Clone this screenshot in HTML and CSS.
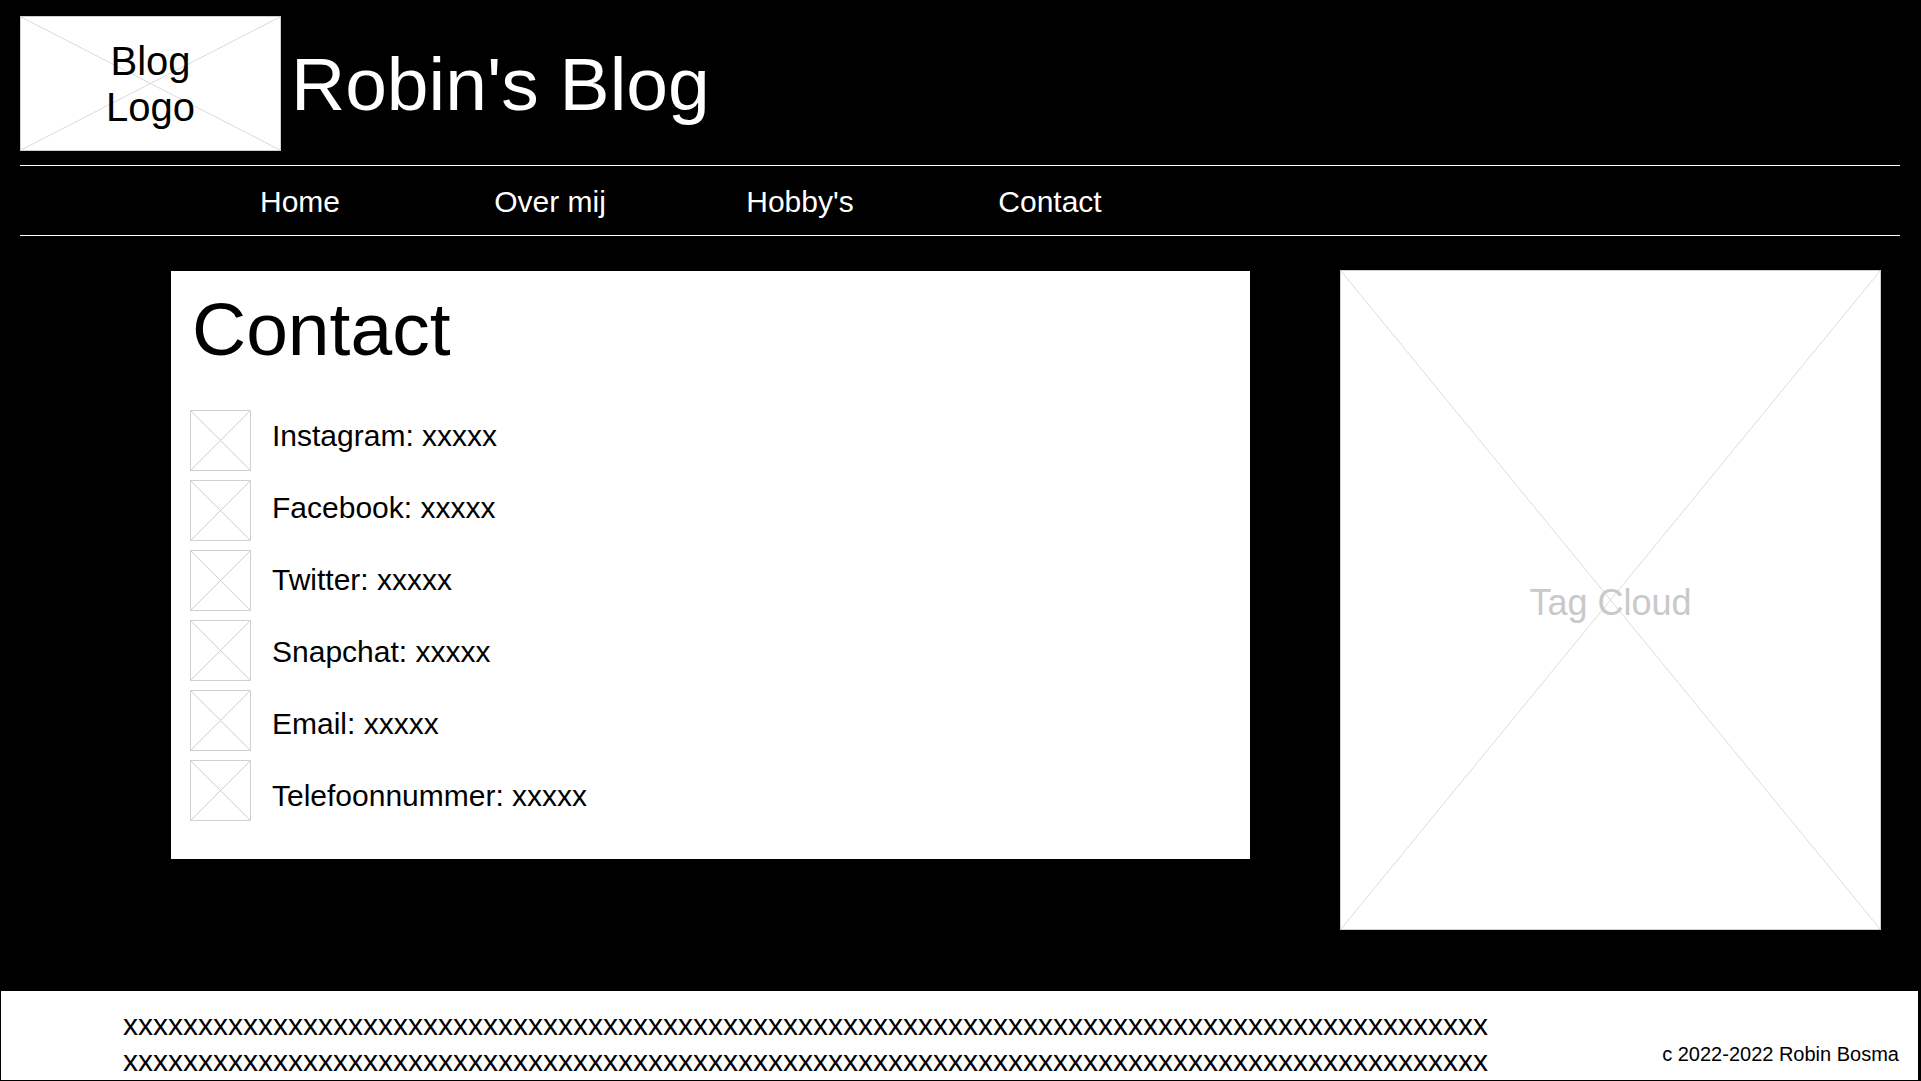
FILE: index.html
```html
<!DOCTYPE html>
<html lang="nl">
<head>
<meta charset="utf-8">
<title>Robin's Blog - Contact</title>
<link rel="stylesheet" href="styles.css">
</head>
<body>
<header class="site-header">
  <div class="logo placeholder"><span>Blog<br>Logo</span></div>
  <h1 class="site-title">Robin's Blog</h1>
</header>
<nav class="main-nav">
  <ul>
    <li><a href="#">Home</a></li>
    <li><a href="#">Over mij</a></li>
    <li><a href="#">Hobby's</a></li>
    <li><a href="#">Contact</a></li>
  </ul>
</nav>
<main class="content">
  <section class="card">
    <h2 class="card-title">Contact</h2>
    <div class="contact-list">
      <div class="icons">
        <span class="icon placeholder"></span>
        <span class="icon placeholder"></span>
        <span class="icon placeholder"></span>
        <span class="icon placeholder"></span>
        <span class="icon placeholder"></span>
        <span class="icon placeholder"></span>
      </div>
      <ul class="labels">
        <li>Instagram: xxxxx</li>
        <li>Facebook: xxxxx</li>
        <li>Twitter: xxxxx</li>
        <li>Snapchat: xxxxx</li>
        <li>Email: xxxxx</li>
        <li>Telefoonnummer: xxxxx</li>
      </ul>
    </div>
  </section>
  <aside class="tag-cloud placeholder"><span>Tag Cloud</span></aside>
</main>
<footer class="site-footer">
  <div class="footer-text">
    <div>xxxxxxxxxxxxxxxxxxxxxxxxxxxxxxxxxxxxxxxxxxxxxxxxxxxxxxxxxxxxxxxxxxxxxxxxxxxxxxxxxxxxxxxxxxx</div>
    <div>xxxxxxxxxxxxxxxxxxxxxxxxxxxxxxxxxxxxxxxxxxxxxxxxxxxxxxxxxxxxxxxxxxxxxxxxxxxxxxxxxxxxxxxxxxx</div>
  </div>
  <div class="copyright">c 2022-2022 Robin Bosma</div>
</footer>
</body>
</html>
```

FILE: styles.css
```css
* {
  box-sizing: border-box;
}

html, body {
  margin: 0;
  padding: 0;
}

body {
  background: #000;
  color: #000;
  font-family: "Liberation Sans", Arial, sans-serif;
  width: 1921px;
  overflow: hidden;
}

.placeholder {
  background-color: #fff;
  border: 1px solid #cfcfcf;
  background-image:
    linear-gradient(to top right, transparent calc(50% - 0.8px), #d6d6d6 50%, transparent calc(50% + 0.8px)),
    linear-gradient(to bottom right, transparent calc(50% - 0.8px), #d6d6d6 50%, transparent calc(50% + 0.8px));
}

/* Header */
.site-header {
  display: flex;
  align-items: center;
  gap: 10px;
  padding: 16px 20px 0 20px;
}

.logo {
  width: 261px;
  height: 135px;
  display: flex;
  align-items: center;
  justify-content: center;
  text-align: center;
  font-size: 40px;
  line-height: 46px;
  color: #000;
}

.site-title {
  margin: 0;
  color: #fff;
  font-weight: normal;
  font-size: 75px;
  line-height: 86px;
}

/* Navigation */
.main-nav {
  margin: 14px 21px 0 20px;
  border-top: 1px solid #fff;
  border-bottom: 1px solid #fff;
}

.main-nav ul {
  list-style: none;
  margin: 0;
  padding: 3px 0 0 155px;
  display: flex;
  height: 69px;
  align-items: center;
}

.main-nav li {
  width: 250px;
  text-align: center;
}

.main-nav a {
  color: #fff;
  text-decoration: none;
  font-size: 30px;
  line-height: 34px;
}

/* Main content */
.content {
  display: flex;
  align-items: flex-start;
  gap: 90px;
  padding: 34px 20px 60px 171px;
}

.card {
  width: 1079px;
  height: 588px;
  margin-top: 1px;
  background: #fff;
  padding: 15px 19px 38px 19px;
}

.card-title {
  margin: 0;
  padding-left: 2px;
  font-weight: normal;
  font-size: 75px;
  line-height: 86px;
}

.contact-list {
  display: flex;
  gap: 21px;
  margin-top: 28px;
}

.icons {
  display: flex;
  flex-direction: column;
  gap: 9px;
  margin-top: 10px;
}

.icon {
  display: block;
  width: 61px;
  height: 61px;
  border-color: #d0d0d0;
}

.labels {
  list-style: none;
  margin: 0;
  padding: 0;
  font-size: 30px;
}

.labels li {
  line-height: 72px;
  height: 72px;
}

.tag-cloud {
  width: 541px;
  height: 660px;
  display: flex;
  align-items: center;
  justify-content: center;
  padding-top: 5px;
  color: #c9c9c9;
  font-size: 36px;
  background-image:
    linear-gradient(to top right, transparent calc(50% - 0.7px), #d8d8d8 50%, transparent calc(50% + 0.7px)),
    linear-gradient(to bottom right, transparent calc(50% - 0.7px), #d8d8d8 50%, transparent calc(50% + 0.7px));
}

/* Footer */
.site-footer {
  height: 91px;
  background: #fff;
  border: 1px solid #000;
  border-right-width: 3px;
  display: flex;
  justify-content: space-between;
  align-items: flex-end;
  padding: 0 19px 14px 122px;
}

.footer-text {
  font-size: 30px;
  line-height: 36px;
  align-self: flex-start;
  padding-top: 16px;
}

.copyright {
  font-size: 20px;
  line-height: 23px;
}
```
